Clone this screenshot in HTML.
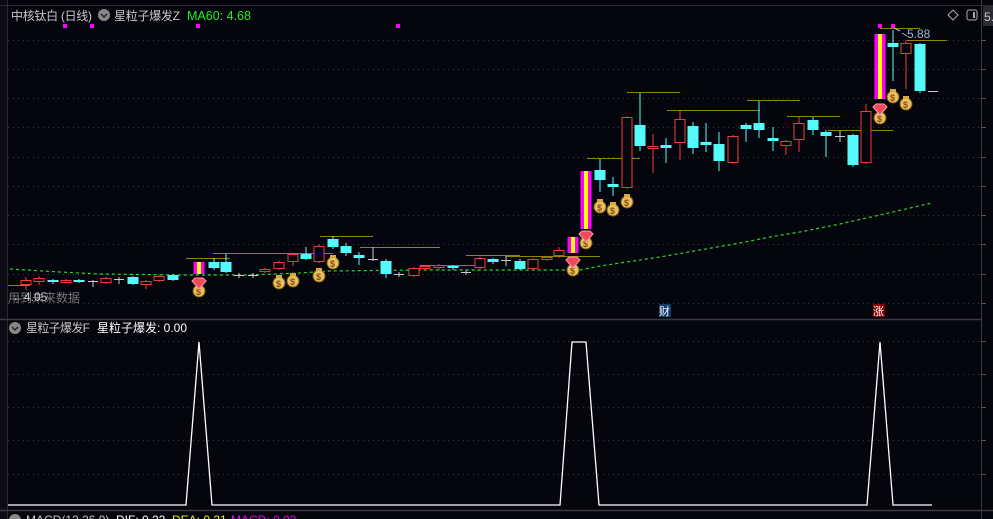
<!DOCTYPE html>
<html><head><meta charset="utf-8">
<style>
html,body{margin:0;padding:0;background:#05050d;overflow:hidden}
body{width:993px;height:519px;position:relative;font-family:"Liberation Sans","Noto Sans CJK SC",sans-serif}
svg{position:absolute;left:0;top:0}
</style></head><body>
<svg id="s" width="993" height="519" viewBox="0 0 993 519" xmlns="http://www.w3.org/2000/svg">
<rect width="993" height="519" fill="#05050d"/>
<rect x="0" y="0" width="7" height="519" fill="#0c0c14"/>
<line x1="7.5" y1="0" x2="7.5" y2="519" stroke="#2a2a30"/>
<line x1="0" y1="5.5" x2="993" y2="5.5" stroke="#2a2a30"/>
<line x1="981.5" y1="0" x2="981.5" y2="519" stroke="#3a3a40"/>
<line x1="0" y1="319.5" x2="981" y2="319.5" stroke="#3a3a40" stroke-width="1.5"/>
<line x1="0" y1="510.5" x2="993" y2="510.5" stroke="#3a3a40" stroke-width="1.5"/>
<rect x="983" y="6" width="10" height="20" fill="#2b2b33"/>
<text x="984" y="21" fill="#c8c8c8" font-size="12">5.</text>
<g id="grid"></g>
<g id="ol" stroke="#8a8a00" stroke-width="1"></g>
<path id="ma" fill="none" stroke="#22dd22" stroke-width="1.2" stroke-dasharray="3,3" d="M10,269 L60,272 L100,274 L180,275 L250,275 L300,273 L330,271 L420,270 L580,270 L600,266 L620,263 L660,257 L700,250 L740,243 L770,237 L800,232 L840,224 L880,215 L910,208 L932,203"/>
<g id="c"></g>
<g id="icons"></g>
<g fill="#ff00ff"><rect x="63" y="24" width="4" height="4"/><rect x="90" y="24" width="4" height="4"/><rect x="196" y="24" width="4" height="4"/><rect x="396" y="24" width="4" height="4"/><rect x="878" y="24" width="4" height="4"/><rect x="891" y="24" width="4" height="4"/></g>
<path d="M894,28 L900,31 M902,33 L907,36" stroke="#bbb" stroke-width="1"/>
<text x="907" y="38" fill="#9ab8d8" font-size="12">5.88</text>
<path d="M953,10 L958,15 L953,20 L948,15 Z" fill="none" stroke="#aaa"/>
<rect x="967" y="10" width="10" height="10" rx="2" fill="none" stroke="#aaa"/><rect x="973" y="12" width="2" height="6" fill="#aaa"/>
<text x="11" y="20" fill="#c8c8c8" font-size="12" textLength="81">中核钛白 (日线)</text>
<circle cx="104" cy="15" r="6" fill="#888"/><path d="M101,14 L104,17 L107,14" stroke="#222" stroke-width="1.5" fill="none"/>
<text x="114" y="20" fill="#c8c8c8" font-size="12" textLength="66">星粒子爆发Z</text>
<text x="187" y="20" fill="#22ee22" font-size="12.5">MA60: 4.68</text>
<text x="8" y="302" fill="#777" font-size="12">用到未来数据</text>
<text x="12" y="301" fill="#c8c8c8" font-size="12">←4.05</text>
<rect x="659" y="304" width="12" height="13" fill="#103a6a"/><text x="659" y="315" fill="#fff" font-size="11">财</text>
<rect x="873" y="304" width="12" height="13" fill="#8a0000"/><text x="873" y="315" fill="#fff" font-size="11">涨</text>
<circle cx="15" cy="328" r="6" fill="#888"/><path d="M12,327 L15,330 L18,327" stroke="#222" stroke-width="1.5" fill="none"/>
<text x="26" y="332" fill="#c8c8c8" font-size="12" textLength="64">星粒子爆发F</text>
<text x="97" y="332" fill="#fff" font-size="12" textLength="90">星粒子爆发: 0.00</text>
<path d="M8,505 L186,505 L199,342 L212,505 L560,505 L572,342 L586,342 L599,505 L867,505 L880,342 L893,505 L932,505" fill="none" stroke="#fff" stroke-width="1.3"/>
<circle cx="15" cy="520" r="6" fill="#888"/>
<text x="26" y="524" fill="#c8c8c8" font-size="12">MACD(12,26,9)</text>
<text x="116" y="524" fill="#fff" font-size="12">DIF: 0.22</text>
<text x="172" y="524" fill="#ee0" font-size="12">DEA: 0.21</text>
<text x="231" y="524" fill="#e0e" font-size="12">MACD: 0.02</text>
</svg>
<script>
var NS="http://www.w3.org/2000/svg";
function el(p,t,a){var e=document.createElementNS(NS,t);for(var k in a)e.setAttribute(k,a[k]);document.getElementById(p).appendChild(e);return e;}
[40,69,98,127,157,186,215,244,274,303,341,374,407,440,474].forEach(function(y){
 el("grid","line",{x1:8,y1:y+.5,x2:981,y2:y+.5,stroke:"#3a3a44","stroke-dasharray":"1,4"});
 el("grid","line",{x1:981,y1:y+.5,x2:986,y2:y+.5,stroke:"#555"});
});
[[8,30,285],[186,230,258],[213,333,253],[320,373,236],[360,440,247],[420,480,265],[466,520,255],[506,580,256],[540,600,256],[587,640,158],[627,680,92],[667,760,110],[747,800,100],[787,840,116],[828,893,130],[880,920,28],[907,947,40]].forEach(function(o){
 el("ol","line",{x1:o[0],y1:o[2]+.5,x2:o[1],y2:o[2]+.5});
});
var C=[
[26,280,285,277,290,'r'],[39,278,282,276,285,'r'],[53,280,282,279,284,'c'],[66,280,282,279,283,'R'],[79,280,281,279,283,'c'],[93,281,282,280,287,'g'],[106,278,283,277,284,'r'],[119,279,280,277,284,'g'],[133,277,284,276,285,'c'],[146,281,285,280,289,'r'],[159,276,281,275,282,'r'],[173,275,280,274,281,'c'],
[199,262,274,260,276,'m'],[214,262,268,258,270,'c'],[226,262,272,254,273,'c'],[239,275,276,273,278,'g'],[253,275,276,273,278,'g'],[265,269,272,268,273,'r'],[279,262,269,261,270,'r'],[293,254,262,253,266,'r'],[306,254,259,247,260,'c'],[319,246,262,244,263,'r'],[333,239,247,236,249,'c'],[346,246,253,243,256,'c'],[359,255,258,252,265,'c'],[373,259,260,247,261,'g'],[386,261,274,259,278,'c'],[399,274,275,272,277,'g'],[414,268,276,267,277,'r'],[425,266,268,265,269,'r'],[439,265,268,264,270,'R'],[453,266,268,265,270,'c'],[466,272,273,270,275,'g'],[480,258,268,257,269,'r'],[493,259,262,258,264,'c'],[506,260,261,256,266,'g'],[520,261,269,259,270,'c'],[533,259,269,258,270,'r'],[547,257,259,256,261,'R'],[559,250,256,247,258,'r'],[573,237,253,235,255,'m'],
[586,171,229,170,231,'m'],[600,170,180,159,192,'c'],[613,184,187,177,196,'c'],[627,117,188,116,189,'r'],[640,125,146,93,151,'c'],[653,146,149,134,173,'R'],[666,145,148,138,163,'c'],[680,119,143,111,160,'r'],[693,126,148,122,154,'c'],[706,142,145,123,152,'c'],[719,144,161,132,171,'c'],[733,136,163,135,164,'r'],[746,125,129,123,142,'c'],[759,123,130,101,138,'c'],[773,138,141,127,151,'c'],[786,141,146,140,155,'R'],[799,123,140,117,152,'r'],[813,120,130,117,135,'c'],[826,132,136,130,157,'c'],[840,136,137,131,142,'g'],[853,135,165,134,167,'c'],[866,111,163,104,164,'r'],
[880,34,99,33,100,'m'],[893,43,47,30,81,'c'],[906,43,54,40,89,'r'],[920,44,91,43,93,'c']];
C.forEach(function(d){
 var x=d[0],t=d[1],b=d[2],wt=d[3],wb=d[4],k=d[5],w=11,l=x-5.5;
 if(k=='g'){el("c","line",{x1:x,y1:wt,x2:x,y2:wb,stroke:"#ccc"});el("c","line",{x1:x-5,y1:t+.5,x2:x+5,y2:t+.5,stroke:"#ccc"});return;}
 if(k=='m'){el("c","rect",{x:l,y:t,width:w,height:b-t,fill:"#ff00ff"});el("c","rect",{x:x-2,y:t,width:4,height:b-t,fill:"#ffff00"});return;}
 var col=(k=='c')?"#55fafa":"#f23a3a";
 el("c","line",{x1:x,y1:wt,x2:x,y2:wb,stroke:col});
 if(k=='c')el("c","rect",{x:l,y:t,width:w,height:Math.max(b-t,2),fill:col});
 else el("c","rect",{x:l+.5,y:t+.5,width:w-1,height:Math.max(b-t-1,2),fill:"#05050d",stroke:col});
});
el("c","line",{x1:928,y1:91.5,x2:938,y2:91.5,stroke:"#ccc"});
function bag(x,y){el("icons","circle",{cx:x,cy:y,r:6,fill:"#e8c060",stroke:"#7a5a10","stroke-width":1});el("icons","rect",{x:x-3,y:y-8,width:6,height:3,fill:"#d8a840"});var t=el("icons","text",{x:x-3,y:y+4,fill:"#8a4a10","font-size":"9","font-weight":"bold"});t.textContent="$";}
function gem(x,y){el("icons","path",{d:"M"+(x-7)+","+(y-3)+" L"+(x-4)+","+(y-6)+" L"+(x+4)+","+(y-6)+" L"+(x+7)+","+(y-3)+" L"+x+","+(y+5)+" Z",fill:"#f04a5a",stroke:"#ff9aa8","stroke-width":1});}
[[199,291],[279,283],[293,281],[319,276],[333,263],[573,270],[586,243],[600,207],[613,210],[627,202],[880,118],[893,97],[906,104]].forEach(function(p){bag(p[0],p[1]);});
[[199,284],[573,263],[586,237],[880,110]].forEach(function(p){gem(p[0],p[1]);});
</script>
</body></html>
